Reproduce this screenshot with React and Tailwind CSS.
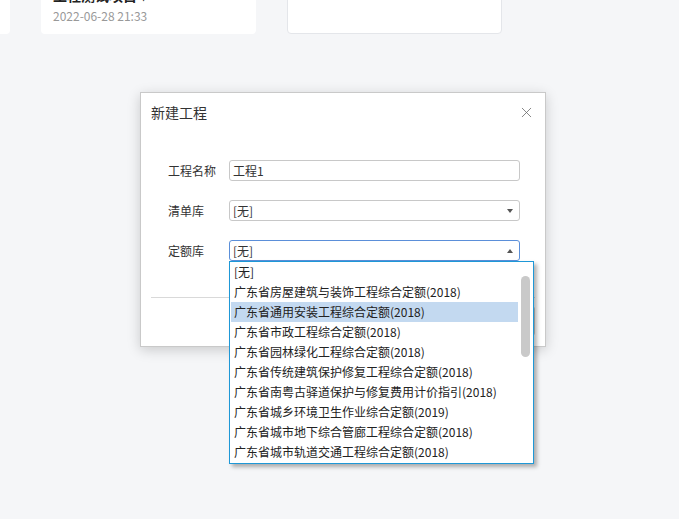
import { X } from "lucide-react";

const quotaOptions = [
  "[无]",
  "广东省房屋建筑与装饰工程综合定额(2018)",
  "广东省通用安装工程综合定额(2018)",
  "广东省市政工程综合定额(2018)",
  "广东省园林绿化工程综合定额(2018)",
  "广东省传统建筑保护修复工程综合定额(2018)",
  "广东省南粤古驿道保护与修复费用计价指引(2018)",
  "广东省城乡环境卫生作业综合定额(2019)",
  "广东省城市地下综合管廊工程综合定额(2018)",
  "广东省城市轨道交通工程综合定额(2018)",
];

function Caret({ up }) {
  return (
    <svg width="6" height="4" viewBox="0 0 6 4" className="mr-[6px]">
      {up ? <path d="M0 4 L3 0 L6 4 Z" fill="#555" /> : <path d="M0 0 L6 0 L3 4 Z" fill="#555" />}
    </svg>
  );
}

export default function App() {
  const font = { fontFamily: '"Noto Sans CJK SC", "Noto Sans", sans-serif' };
  const labelClass = "w-[61px] text-[12px] text-[#333]";

  return (
    <div
      className="relative w-[679px] h-[519px] overflow-hidden bg-[#f5f6f8]"
      style={font}
    >
      {/* project cards, scrolled mostly out of view */}
      <div className="flex gap-[31px] -ml-[205px] -mt-[16px]">
        <div className="w-[215px] h-[50px] bg-white rounded-[4px]" />
        <div className="w-[215px] h-[50px] bg-white rounded-[4px] px-[12px] flex flex-col justify-end pb-[10px]">
          <div className="text-[14px] leading-[14px] text-[#222] font-bold mb-[6px]">
            工程测试项目 ▾
          </div>
          <div className="text-[12px] leading-[16px] text-[#999]">2022-06-28 21:33</div>
        </div>
        <div className="w-[215px] h-[50px] bg-white rounded-[4px] border border-[#e4e6ea]" />
      </div>

      {/* modal */}
      <div className="absolute left-[140px] top-[92px] w-[406px] h-[255px] bg-white border border-[#c9c9c9] shadow-[0_3px_12px_rgba(0,0,0,0.18)] flex flex-col">
        <div className="flex items-center justify-between h-[39px] pl-[10px] pr-[10px]">
          <span className="text-[14px] text-[#333]">新建工程</span>
          <X size={17} strokeWidth={1.1} color="#666" />
        </div>

        <div className="flex flex-col gap-[19px] pl-[27px] pt-[28px]">
          <div className="flex items-center">
            <span className={labelClass}>工程名称</span>
            <div className="w-[291px] h-[21px] border border-[#c8c8c8] rounded-[3px] flex items-center px-[3px] text-[12px] text-[#333]">
              工程1
            </div>
          </div>
          <div className="flex items-center">
            <span className={labelClass}>清单库</span>
            <div className="w-[291px] h-[21px] border border-[#c8c8c8] rounded-[3px] flex items-center justify-between pl-[3px] text-[12px] text-[#333]">
              <span>[无]</span>
              <Caret />
            </div>
          </div>
          <div className="flex items-center">
            <span className={labelClass}>定额库</span>
            <div className="w-[291px] h-[21px] border border-[#5b8fd9] rounded-[3px] flex items-center justify-between pl-[3px] text-[12px] text-[#333]">
              <span>[无]</span>
              <Caret up />
            </div>
          </div>
        </div>

        <div className="mx-[10px] mt-[36px] border-t border-[#d9d9d9]" />
        <div className="flex justify-end gap-[8px] pr-[10px] pt-[8px]">
          <button className="h-[30px] px-[16px] border border-[#ccc] rounded-[3px] text-[12px] text-[#333] bg-[#f5f5f5]">
            取消
          </button>
          <button className="h-[30px] px-[16px] border border-[#ccc] rounded-[3px] text-[12px] text-[#333] bg-[#f5f5f5]">
            确定
          </button>
        </div>
      </div>

      {/* open dropdown list */}
      <div className="absolute left-[229px] top-[261px] w-[305px] h-[203px] bg-white border border-[#1e98d7] shadow-[3px_3px_4px_rgba(0,0,0,0.3)] flex">
        <div className="flex-1 flex flex-col pl-[1px]">
          {quotaOptions.map((opt, i) => (
            <div
              key={opt}
              className={
                "h-[20px] leading-[20px] pl-[3px] text-[12px] text-[#222] whitespace-nowrap " +
                (i === 2 ? "bg-[#c3d9f0]" : "")
              }
            >
              {opt}
            </div>
          ))}
        </div>
        <div className="w-[15px] flex justify-center pt-[14px]">
          <div className="w-[9px] h-[81px] rounded-full bg-[#c9c9c9]" />
        </div>
      </div>
    </div>
  );
}
